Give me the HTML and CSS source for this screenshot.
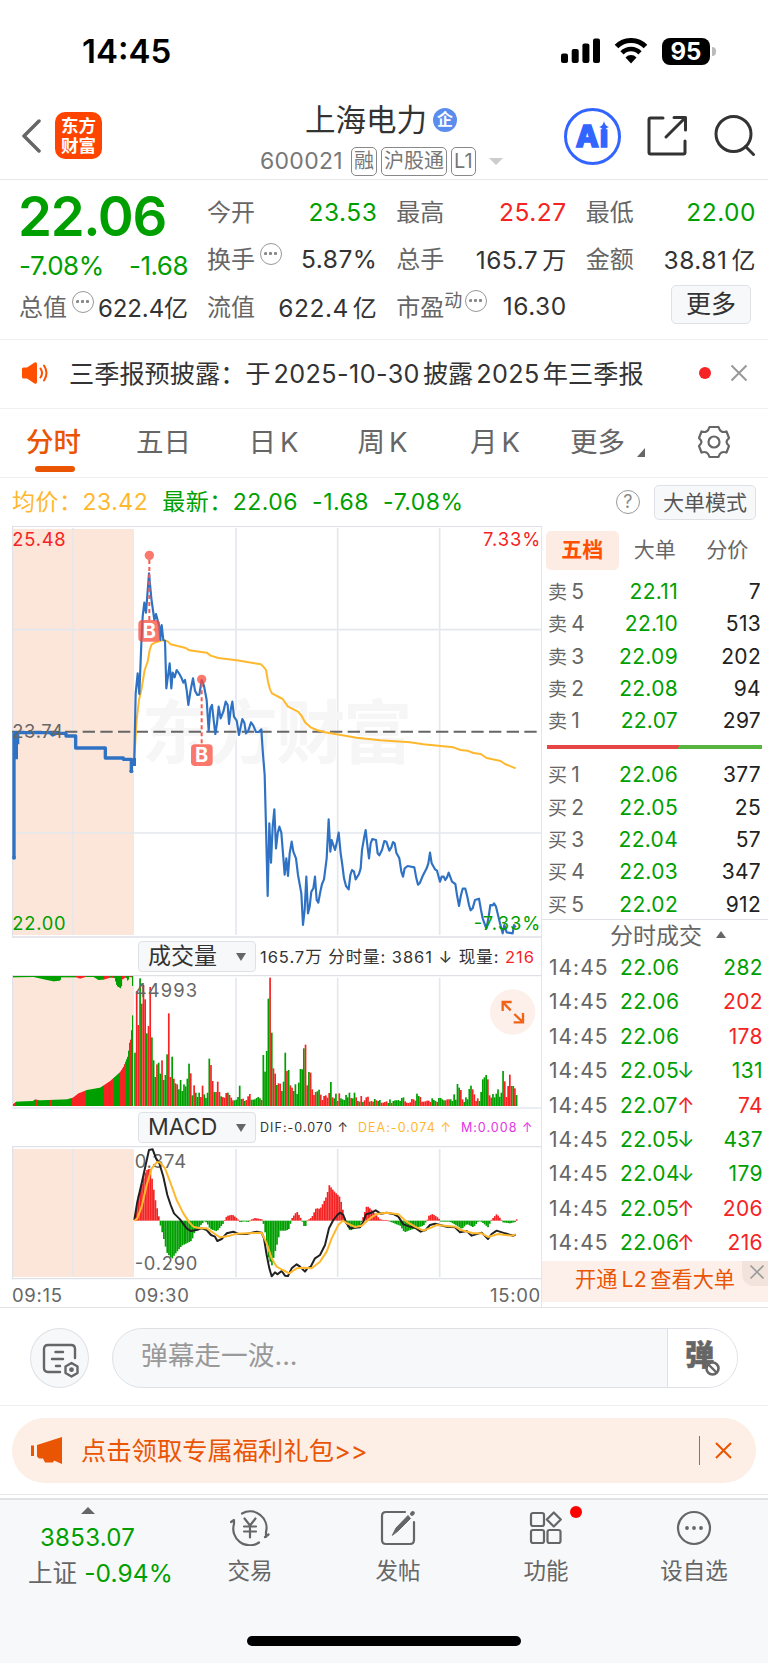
FILE: index.html
```
<!DOCTYPE html>
<html lang="zh-CN">
<head>
    <meta charset="UTF-8">
    <meta name="viewport" content="width=device-width, initial-scale=1.0">
    <title>上海电力 600021</title>
    <link rel="stylesheet" href="styles.css">
</head>
<body>
    <div class="status-bar">
        <span class="clock">14:45</span>
        <svg class="signal" width="40" height="26" viewBox="0 0 40 26">
            <rect x="0" y="15.500" width="7" height="9.500" rx="2"/>
            <rect x="10.700" y="11" width="7" height="14" rx="2"/>
            <rect x="21.400" y="5.500" width="7" height="19.500" rx="2"/>
            <rect x="32" y="0.500" width="7" height="24.500" rx="2"/>
        </svg>
        <svg class="wifi" width="34" height="26" viewBox="0 0 34 26">
            <path d="M2.500 8.500a20.500 20.500 0 0 1 29 0" fill="none" stroke="#000" stroke-width="5"/>
            <path d="M8 14.800a12.500 12.500 0 0 1 18 0" fill="none" stroke="#000" stroke-width="4.600"/>
            <path d="M11.500 19.500a7.500 7.500 0 0 1 11 0L17 25.500z"/>
        </svg>
        <span class="battery">95</span>
        <span class="battery-tip"></span>
    </div>

    <header class="header">
        <svg class="back" width="20" height="34" viewBox="0 0 20 34"><path d="M18 2 3 17l15 15" fill="none" stroke="#666" stroke-width="3.500" stroke-linecap="round" stroke-linejoin="round"/></svg>
        <div class="logo">东方<br>财富</div>
        <div class="stock">
            <div class="stock-name">上海电力<span class="badge">企</span></div>
            <div class="stock-code">
                <span class="code">600021</span>
                <span class="tag">融</span>
                <span class="tag">沪股通</span>
                <span class="tag">L1</span>
                <i class="caret"></i>
            </div>
        </div>
        <div class="tools">
            <div class="ai">
                <span>Aı</span>
                <svg width="10" height="12" viewBox="0 0 9 11"><path d="M4.500 0Q5.300 4.500 9 5.500 5.300 6.500 4.500 11 3.700 6.500 0 5.500 3.700 4.500 4.500 0z" fill="#3264ff"/></svg>
            </div>
            <svg width="42" height="42" viewBox="0 0 42 42" fill="none" stroke="#333" stroke-width="3" stroke-linecap="round" stroke-linejoin="round"><path d="M17 3H4.500Q3 3 3 4.500V37.500Q3 39 4.500 39H37.500Q39 39 39 37.500V26M28 2.500H39.500V15M39 3 20 22"/></svg>
            <svg width="42" height="42" viewBox="0 0 42 42" fill="none" stroke="#333" stroke-width="3" stroke-linecap="round"><circle cx="19.500" cy="19" r="17.500"/><path d="M31.500 31.500 39.500 39.500"/></svg>
        </div>
    </header>

    <section class="quote">
        <div class="price-col">
            <div class="price">22.06</div>
            <div class="change"><span>-7.08%</span><span>-1.68</span></div>
            <div class="cell"><label>总值</label><i class="dots"></i><b>622.4亿</b></div>
        </div>
        <div class="quote-grid">
            <div class="cell"><label>今开</label><b class="green">23.53</b></div>
            <div class="cell"><label>最高</label><b class="red">25.27</b></div>
            <div class="cell"><label>最低</label><b class="green">22.00</b></div>
            <div class="cell"><label>换手</label><i class="dots"></i><b>5.87%</b></div>
            <div class="cell"><label>总手</label><b>165.7<small>万</small></b></div>
            <div class="cell"><label>金额</label><b>38.81<small>亿</small></b></div>
            <div class="cell"><label>流值</label><b>622.4<small>亿</small></b></div>
            <div class="cell"><label>市盈<sup>动</sup></label><i class="dots near"></i><b>16.30</b></div>
            <div class="cell"><button class="more">更多</button></div>
        </div>
    </section>

    <section class="notice">
        <svg width="27" height="22" viewBox="0 0 27 22"><path d="M0 7q0-1.500 1.500-1.500H5L12.500.500q2.500-1 2.500 1.500v18q0 2.500-2.500 1.500L5 16.500H1.500Q0 16.500 0 15z" fill="#ff5000"/><path d="M18.500 6.500q3 4.500 0 9M22 3.500q5 7.500 0 15" fill="none" stroke="#ff5000" stroke-width="2" stroke-linecap="round"/></svg>
        <p>三季报预披露：于<span>2025-10-30</span>披露<span>2025</span>年三季报</p>
        <i class="red-dot"></i>
        <svg width="18" height="18" viewBox="0 0 18 18"><path d="M1.500 1.500 16.500 16.500M16.500 1.500 1.500 16.500" stroke="#999" stroke-width="2"/></svg>
    </section>

    <nav class="tabs">
        <a class="active">分时</a>
        <a>五日</a>
        <a>日<em>K</em></a>
        <a>周<em>K</em></a>
        <a>月<em>K</em></a>
        <a class="tab-more">更多</a>
        <svg width="34" height="34" viewBox="0 0 34 34" fill="none" stroke="#666" stroke-width="2.200" stroke-linejoin="round"><path d="M12.500 2H21.500Q22.500 5.500 24.500 6.500T29.500 6.500L32 13Q29.500 15.500 29.500 17T32 21L29.500 27.500Q26.500 26.500 24.500 27.500T21.500 32H12.500Q11.500 28.500 9.500 27.500T4.500 27.500L2 21Q4.500 18.500 4.500 17T2 13L4.500 6.500Q7.500 7.500 9.500 6.500T12.500 2z"/><circle cx="17" cy="17" r="5.500"/></svg>
    </nav>

    <div class="summary">
        <span class="orange">均价：<span>23.42</span></span>
        <span class="green">最新：<span>22.06</span></span>
        <span class="green">-1.68</span>
        <span class="green">-7.08%</span>
        <i class="help">?</i>
        <button class="mode">大单模式</button>
    </div>

    <main class="market">
        <div class="charts">
            <svg class="price-chart" viewBox="36 18 1590 1236">
                <rect class="auction" x="38" y="27" width="364" height="1218"/>
                <path class="grid" d="M219 24V1245M708 24V1245M1013 24V1245M1319 24V1245M38 329H1625M38 939H1625"/>
                <path class="frame" d="M36 19H1626M37.500 19V1251M36 1251H1626"/>
                <text class="watermark" x="425" y="714" textLength="812">东方财富</text>
                <path class="prev-close" d="M36 635H1620"/>
                <polyline class="avg" id="avgLine"/>
                <path class="auction-line" d="M42 1013V638M49 640V718M53 640V673M42 638H150L158 645 170 640H198V648H227V684H316V714H370V718H394V754M403 714V738"/>
                <circle cx="42" cy="1013" r="6" fill="#2f72c4"/>
                <circle cx="394" cy="754" r="6" fill="#2f72c4"/>
                <polyline class="last" id="priceLine"/>
                <g class="marker">
                    <circle cx="448" cy="106" r="14"/>
                    <path d="M448 120V300"/>
                    <rect x="415" y="300" width="65" height="65" rx="12"/>
                    <text x="448" y="354">B</text>
                    <circle cx="605" cy="478" r="14"/>
                    <path d="M605 490V672"/>
                    <rect x="573" y="673" width="65" height="65" rx="12"/>
                    <text x="605" y="727">B</text>
                </g>
                <text class="red" x="37" y="77" textLength="160">25.48</text>
                <text class="red" x="1449" y="77" textLength="172">7.33%</text>
                <text x="37" y="654" textLength="152">23.74</text>
                <text class="green" x="37" y="1229" textLength="160">22.00</text>
                <text class="green" x="1421" y="1229" textLength="200">-7.33%</text>
            </svg>

            <div class="indicator">
                <span class="select">成交量</span>
                <p class="vol-info">165.7万 分时量: 3861 ↓ 现量: <span class="red">216</span></p>
            </div>
            <svg class="volume-chart" viewBox="36 120 1590 402">
                <rect class="auction" x="38" y="121" width="364" height="392"/>
                <path class="grid" d="M219 128V513M708 128V513M1013 128V513M1319 128V513M36 519H1626"/>
                <path class="frame" d="M36 121.500H1626M37.500 121V513"/>
                <g id="volumeBars"></g>
                <text x="404" y="185" textLength="187">44993</text>
                <circle cx="1538" cy="231" r="68" fill="#fdf0ea"/>
                <path class="expand" d="M1535 201H1508V228M1509 202 1532 226M1569 234V262H1541M1568 261 1543 237"/>
            </svg>

            <div class="indicator">
                <span class="select">MACD</span>
                <p class="macd-info"><span>DIF:-0.070 ↑</span><span class="orange">DEA:-0.074 ↑</span><span class="purple">M:0.008 ↑</span></p>
            </div>
            <svg class="macd-chart" viewBox="36 633 1590 402">
                <rect class="auction" x="38" y="642" width="364" height="384"/>
                <path class="grid" d="M219 642V1026M708 642V1026M1013 642V1026M1319 642V1026"/>
                <path class="frame" d="M36 634.500H1626M37.500 634V1030M36 1031H1626"/>
                <g id="macdBars"></g>
                <text x="404" y="699" textLength="154">0.374</text>
                <text x="404" y="1006" textLength="188">-0.290</text>
                <polyline class="dif" id="difLine"/>
                <polyline class="avg" id="deaLine"/>
            </svg>
            <div class="times"><span>09:15</span><span>09:30</span><span>15:00</span></div>
        </div>

        <aside class="depth">
            <div class="depth-tabs"><a class="active">五档</a><a>大单</a><a>分价</a></div>
            <ul class="orders">
                <li><span>卖<em>5</em></span><b>22.11</b><i>7</i></li>
                <li><span>卖<em>4</em></span><b>22.10</b><i>513</i></li>
                <li><span>卖<em>3</em></span><b>22.09</b><i>202</i></li>
                <li><span>卖<em>2</em></span><b>22.08</b><i>94</i></li>
                <li><span>卖<em>1</em></span><b>22.07</b><i>297</i></li>
            </ul>
            <div class="ratio"></div>
            <ul class="orders">
                <li><span>买<em>1</em></span><b>22.06</b><i>377</i></li>
                <li><span>买<em>2</em></span><b>22.05</b><i>25</i></li>
                <li><span>买<em>3</em></span><b>22.04</b><i>57</i></li>
                <li><span>买<em>4</em></span><b>22.03</b><i>347</i></li>
                <li><span>买<em>5</em></span><b>22.02</b><i>912</i></li>
            </ul>
            <div class="deals-title">分时成交<i></i></div>
            <ul class="deals">
                <li><span>14:45</span><b>22.06</b><i class="green">282</i></li>
                <li><span>14:45</span><b>22.06</b><i class="red">202</i></li>
                <li><span>14:45</span><b>22.06</b><i class="red">178</i></li>
                <li class="down"><span>14:45</span><b>22.05</b><i class="green">131</i></li>
                <li class="up"><span>14:45</span><b>22.07</b><i class="red">74</i></li>
                <li class="down"><span>14:45</span><b>22.05</b><i class="green">437</i></li>
                <li class="down"><span>14:45</span><b>22.04</b><i class="green">179</i></li>
                <li class="up"><span>14:45</span><b>22.05</b><i class="red">206</i></li>
                <li class="up"><span>14:45</span><b>22.06</b><i class="red">216</i></li>
            </ul>
            <div class="l2">
                开通<span>L2</span>查看大单
                <div class="l2-close"><svg width="16" height="16" viewBox="0 0 16 16"><path d="M1.500 1.500 14.500 14.500M14.500 1.500 1.500 14.500" stroke="#999" stroke-width="1.600"/></svg></div>
            </div>
        </aside>
    </main>

    <section class="comment">
        <div class="round">
            <svg width="38" height="36" viewBox="0 0 38 36" fill="none" stroke="#666" stroke-width="2.400" stroke-linecap="round" stroke-linejoin="round"><path d="M18 29H6Q2 29 2 25V6Q2 2 6 2H29Q33 2 33 6V15M13.500 9H21M10 16H21M14 23H18M29.500 20 35.500 23.500V30L29.500 33.500 23.500 30V23.500z"/><circle cx="29.500" cy="26.700" r="1.200"/></svg>
        </div>
        <div class="input">
            <span class="placeholder">弹幕走一波...</span>
            <div class="danmu">
                <span>弹</span>
                <svg width="17" height="17" viewBox="0 0 17 17"><circle cx="8.500" cy="8.500" r="6" fill="#fff" stroke="#666" stroke-width="2.600"/><path d="M4.500 4.500 12.500 12.500" stroke="#666" stroke-width="2.400"/></svg>
            </div>
        </div>
    </section>

    <section class="gift-wrap">
        <div class="gift">
            <svg width="31" height="27" viewBox="0 0 31 27" fill="#ea5504"><path d="M0 8.500H3V19H0zM6 8 31 0V27L23 23.500 22 25.500H14L12 21.500H8L6 19.500z"/></svg>
            <p>点击领取专属福利礼包&gt;&gt;</p>
            <i class="divider"></i>
            <svg width="17" height="17" viewBox="0 0 17 17"><path d="M1 1 16 16M16 1 1 16" stroke="#ea5504" stroke-width="2"/></svg>
        </div>
    </section>

    <footer class="bottom">
        <div class="index">
            <i></i>
            <strong>3853.07</strong>
            <p>上证 <span>-0.94%</span></p>
        </div>
        <div class="item">
            <svg width="40" height="36" viewBox="0 0 40 36" fill="none" stroke="#666" stroke-width="2.200" stroke-linecap="round" stroke-linejoin="round"><path d="M12 3.500A16.500 16.500 0 0 1 36 22V27M38.500 24.500 35 27M29 32.500A16.500 16.500 0 0 1 4 14V10L1 12M14.500 8.500 20 15.500 25.500 8.500M20 15.500V27.500M14 16.500H26M14 21.500H26"/></svg>
            <span>交易</span>
        </div>
        <div class="item">
            <svg width="36" height="36" viewBox="0 0 36 36" fill="none" stroke="#666" stroke-width="2.200" stroke-linecap="round"><path d="M25 2H6Q2 2 2 6V30Q2 34 6 34H30Q34 34 34 30V12"/><path d="M12.500 25 16 18 28 5.500 30.500 8.500 18 21z" fill="#666" stroke-width="1"/><path d="M32 3.800 32.800 3" stroke-width="4"/></svg>
            <span>发帖</span>
        </div>
        <div class="item">
            <svg width="34" height="34" viewBox="0 0 34 34" fill="none" stroke="#666" stroke-width="2.200"><rect x="2" y="2" width="13" height="13" rx="2"/><path d="M24.800 1.500 31.800 8.500 24.800 15.500 17.800 8.500z" stroke-linejoin="round"/><rect x="2" y="19" width="13" height="13" rx="2"/><rect x="18.500" y="19" width="13" height="13" rx="2"/></svg>
            <i class="red-dot"></i>
            <span>功能</span>
        </div>
        <div class="item">
            <svg width="36" height="36" viewBox="0 0 36 36" fill="#666"><circle cx="18" cy="18" r="16" fill="none" stroke="#666" stroke-width="2.200"/><circle cx="11" cy="18" r="1.900"/><circle cx="18" cy="18" r="1.900"/><circle cx="25" cy="18" r="1.900"/></svg>
            <span>设自选</span>
        </div>
        <div class="home-bar"></div>
    </footer>

    <script>
        const RED = "#f52323";
        const GREEN = "#009f00";

        const price = "403,714 407,520 413,460 418,522 424,370 428,290 433,248 438,278 447,160 454,235 463,300 468,282 478,320 481,360 485,315 490,360 495,362 499,505 509,430 514,505 518,458 524,472 530,450 537,460 545,475 550,488 555,480 560,510 565,555 572,510 579,475 585,512 592,525 598,524 605,480 612,498 620,540 626,632 631,565 636,555 641,600 646,642 651,610 656,560 662,595 670,575 677,545 683,555 687,612 692,570 697,545 702,590 710,602 717,645 727,597 733,608 738,640 745,632 753,607 760,617 768,636 776,636 784,628 788,690 794,765 798,920 803,1128 808,910 813,1028 818,920 823,868 828,985 833,940 838,920 844,938 849,1000 854,1064 859,1015 864,1068 869,1000 875,965 880,995 888,1015 894,1065 904,1120 909,1215 914,1170 919,1070 924,1180 929,1160 934,1115 940,1105 945,1070 950,1140 955,1148 960,1120 966,1092 972,1078 980,1015 986,898 991,995 995,960 1005,990 1011,965 1016,938 1022,1000 1027,1035 1032,1075 1038,1098 1046,1108 1051,1065 1056,1050 1062,1055 1067,1078 1077,1062 1082,1045 1086,990 1092,955 1097,930 1102,975 1107,1015 1112,970 1117,957 1128,960 1133,1000 1138,1006 1146,990 1153,963 1159,965 1168,992 1174,982 1179,966 1184,970 1189,998 1198,1015 1204,1055 1209,1070 1214,1045 1223,1038 1243,1042 1249,1075 1254,1094 1260,1088 1268,1068 1280,1045 1285,1030 1290,998 1295,1030 1305,1048 1311,1052 1320,1085 1325,1070 1331,1070 1336,1080 1341,1072 1346,1058 1356,1085 1366,1092 1371,1125 1377,1158 1383,1125 1388,1106 1396,1106 1402,1130 1407,1155 1412,1171 1418,1165 1425,1140 1437,1136 1443,1170 1448,1195 1459,1226 1466,1190 1471,1155 1478,1156 1482,1150 1488,1160 1494,1185 1500,1210 1508,1240 1513,1215 1520,1237 1538,1240 1542,1215 1547,1222";
        const avg = "403,714 410,600 417,540 424,510 434,450 443,425 449,390 455,373 465,368 490,360 503,364 512,373 557,384 568,391 620,398 632,407 655,414 710,421 783,433 790,440 798,450 804,485 810,508 816,520 848,537 864,560 894,575 905,588 915,607 932,622 950,630 975,637 1070,653 1140,661 1230,667 1270,673 1360,682 1382,690 1402,692 1420,699 1442,702 1460,714 1502,723 1515,732 1547,745";
        const dif = "403,855 412,800 425,745 437,690 447,645 458,643 468,670 478,685 490,725 502,780 512,810 522,835 540,853 560,880 572,888 590,885 605,880 620,885 633,900 645,905 652,918 665,912 680,895 700,890 715,897 740,897 770,890 785,893 792,910 800,960 808,1000 815,1024 825,1012 832,1018 845,1008 855,1022 864,1023 875,1000 890,988 900,995 915,1010 922,1000 932,995 945,970 960,960 975,930 987,880 1000,855 1012,840 1020,833 1030,840 1038,862 1050,880 1080,877 1090,860 1098,838 1115,833 1127,826 1142,836 1160,833 1182,838 1195,845 1210,868 1230,875 1245,878 1262,890 1277,885 1290,870 1305,866 1340,875 1365,877 1380,892 1400,888 1415,902 1445,893 1464,912 1475,897 1490,887 1515,895 1540,902 1547,899";
        const dea = "403,857 412,850 425,815 440,750 455,700 470,682 480,682 495,700 512,745 530,795 550,835 568,862 580,875 600,880 620,880 645,897 660,907 690,902 710,896 740,895 785,893 800,925 815,970 830,995 848,1005 868,1015 890,1000 910,998 935,1000 960,980 980,950 995,910 1015,870 1028,857 1042,865 1065,876 1085,872 1110,850 1130,837 1160,833 1195,838 1220,860 1245,875 1270,887 1295,877 1310,870 1365,875 1385,886 1420,895 1445,895 1464,906 1495,897 1515,900 1535,902 1547,898";

        // one entry per minute: direction + height
        const volume = "g160 r345 r243 g383 r307 r363 r320 g218 r240 r357 g206 g137 g87 r125 g130 g97 r137 g78 g93 g155 r278 r87 g148 r82 g68 r65 g50 g78 g45 g65 g59 g82 g127 r98 g32 r62 g40 g27 g40 r27 r61 g35 g24 g40 g142 r123 r75 g42 r42 r73 r42 g29 r27 r25 r39 g40 r33 r25 r17 g17 g19 g27 g61 g21 r22 g15 r18 r29 r36 g19 g19 g20 g24 g27 g23 r18 g153 g103 g165 g322 r385 g220 r113 r97 g63 r68 r67 g45 g73 g160 r105 g108 r62 r55 g45 g65 g36 g70 g111 g110 g173 r184 r62 g102 r100 r50 r33 r42 g44 g49 r34 r18 r30 r32 r25 r39 g72 r26 g23 g37 r15 r38 g23 g20 g18 g33 g26 g40 r24 g23 g40 r26 g15 r13 r30 g12 r17 r26 r28 g13 r15 r13 g21 r17 g15 g18 r10 r10 r12 r14 g9 g20 r9 g15 g17 g17 g18 g15 g24 g26 r14 r10 r9 r11 r21 r20 r16 g37 g30 r27 r13 r13 r14 r16 r16 r12 g23 g18 g15 r12 g24 g24 g20 g17 r17 r20 r20 g20 g15 g35 g19 g66 g55 r48 r20 g12 g26 g20 g51 g61 r50 r35 r15 r23 g15 g42 g80 g86 g93 r80 r32 r25 g36 g26 g37 g50 g28 g40 g105 r74 r27 r60 r94 r60 g60 r53 g33";
        const auctionVolume = [[38,5],[48,13],[98,15],[105,20],[118,17],[200,20],[218,25],[235,38],[260,48],[300,55],[330,75],[360,102],[370,118],[383,150],[388,190],[393,205],[396,272],[400,272]];
        const auctionRest = [[38,4],[100,3],[140,12],[160,16],[180,14],[184,4],[228,4],[240,8],[256,3],[280,3],[295,12],[310,11],[330,5],[343,6],[350,30],[363,38],[367,10],[378,4],[383,16],[388,3],[394,4],[396,30],[400,30]];
        const auctionRed = [[38,44],[98,102],[106,109],[134,137],[148,152],[216,257],[310,326],[330,340],[360,376],[386,392]];
        const restRed = [[226,258],[312,328],[333,338],[365,378],[387,392]];
        const macd = [[403,5],[415,75],[437,150],[450,158],[455,130],[465,65],[478,3],[481,-15],[490,-50],[500,-95],[515,-115],[525,-100],[545,-75],[575,-60],[583,-35],[605,-10],[614,0],[622,-10],[630,-25],[650,-32],[670,-8],[675,5],[680,14],[697,18],[712,6],[720,-5],[732,-2],[745,-4],[752,3],[765,8],[785,4],[789,-5],[795,-35],[800,-70],[805,-110],[815,-135],[823,-100],[831,-70],[840,-30],[858,-30],[866,-25],[873,-3],[876,8],[890,28],[904,4],[911,-16],[917,-16],[921,0],[935,10],[948,38],[960,35],[980,75],[987,107],[1000,90],[1020,70],[1034,5],[1040,-15],[1050,-30],[1080,-15],[1087,5],[1100,45],[1115,32],[1140,4],[1150,2],[1162,2],[1170,-3],[1200,-15],[1213,-35],[1230,-28],[1270,-15],[1281,2],[1285,14],[1297,20],[1315,8],[1322,-3],[1350,-3],[1370,-15],[1385,-25],[1400,-10],[1420,-20],[1436,0],[1445,-4],[1464,-20],[1474,3],[1490,20],[1503,4],[1508,-5],[1530,-8],[1545,-4],[1549,4],[1554,4]];

        document.getElementById("priceLine").setAttribute("points", price);
        document.getElementById("avgLine").setAttribute("points", avg);
        document.getElementById("difLine").setAttribute("points", dif);
        document.getElementById("deaLine").setAttribute("points", dea);

        function valueAt(points, x) {
            for (let i = 1; i < points.length; i++) {
                let [x0, y0] = points[i - 1];
                let [x1, y1] = points[i];
                if (x <= x1) return y0 + (y1 - y0) * (x - x0) / (x1 - x0);
            }
            return points[points.length - 1][1];
        }

        function inRanges(ranges, x) {
            return ranges.some(r => x >= r[0] && x < r[1]);
        }

        function addBar(group, x, y, width, height, color) {
            let bar = document.createElementNS("http://www.w3.org/2000/svg", "rect");
            bar.setAttribute("x", x);
            bar.setAttribute("y", y);
            bar.setAttribute("width", width);
            bar.setAttribute("height", height);
            bar.setAttribute("fill", color);
            group.appendChild(bar);
        }

        let volumeBars = document.getElementById("volumeBars");
        for (let x = 39; x < 399; x += 3) {
            let h = valueAt(auctionVolume, x + 1);
            addBar(volumeBars, x, 513 - h, 3.3, h, inRanges(auctionRed, x) ? RED : GREEN);
            addBar(volumeBars, x, 123, 3.3, valueAt(auctionRest, x + 1), inRanges(restRed, x) ? RED : GREEN);
        }
        volume.split(" ").forEach((item, i) => {
            let h = Number(item.slice(1));
            addBar(volumeBars, 402.5 + i * 5.065, 513 - h, 5.1, h, item[0] === "r" ? RED : GREEN);
        });

        let macdBars = document.getElementById("macdBars");
        for (let i = 0; i < 227; i++) {
            let x = 403 + i * 5.065;
            let v = valueAt(macd, x + 2);
            addBar(macdBars, x, v > 0 ? 857 - v : 857, 5.1, Math.max(Math.abs(v), 2), v > 0 ? RED : GREEN);
        }
    </script>
</body>
</html>
```
FILE: styles.css
```
* {
    box-sizing: border-box;
}
body {
    margin: 0;
    width: 768px;
    background: #fff;
    color: #333;
    font-family: Inter, "Noto Sans CJK SC", sans-serif;
}
p, ul {
    margin: 0;
    padding: 0;
    list-style: none;
}
i, em {
    font-style: normal;
}
b {
    font-weight: 400;
}
svg {
    display: block;
    flex: none;
}
.red {
    color: #f52323;
    fill: #f52323;
}
.green {
    color: #009f00;
    fill: #009f00;
}
.orange {
    color: #ffb82e;
}
.purple {
    color: #e335e3;
}
.red-dot {
    width: 12px;
    height: 12px;
    border-radius: 50%;
    background: #f52323;
}

/* status bar */
.status-bar {
    display: flex;
    align-items: center;
    height: 95px;
    padding: 7px 0 0 82px;
}
.clock {
    width: 479px;
    font-size: 33px;
    font-weight: 600;
    color: #000;
}
.wifi {
    margin-left: 13px;
}
.battery {
    width: 48px;
    height: 27px;
    margin-left: 14px;
    border-radius: 8px;
    background: #000;
    color: #fff;
    font-size: 24px;
    font-weight: 700;
    line-height: 27px;
    text-align: center;
}
.battery-tip {
    width: 4px;
    height: 9px;
    margin-left: 2px;
    border-radius: 0 4px 4px 0;
    background: #bbb;
}

/* header */
.header {
    display: flex;
    height: 85px;
    border-bottom: 1px solid #e8e8e8;
    padding-left: 21px;
}
.back {
    margin-top: 24px;
}
.logo {
    width: 47px;
    height: 47px;
    margin: 17px 0 0 14px;
    padding-top: 4px;
    border-radius: 10px;
    background: #ff4400;
    color: #fff;
    font-size: 17.500px;
    font-weight: 700;
    line-height: 19.500px;
    text-align: center;
}
.stock {
    width: 303px;
    margin-left: 158px;
}
.stock-name {
    display: flex;
    align-items: center;
    height: 49px;
    padding: 0 0 3px 45px;
    font-size: 30.500px;
}
.badge {
    width: 24px;
    height: 24px;
    margin: 3px 0 0 6px;
    border-radius: 50%;
    background: #5b8dee;
    color: #fff;
    font-size: 16px;
    font-weight: 700;
    line-height: 22px;
    text-align: center;
}
.stock-code {
    display: flex;
    align-items: center;
    gap: 4px;
    height: 34px;
    color: #777;
    font-size: 23px;
}
.code {
    width: 87px;
    letter-spacing: 0.3px;
}
.tag {
    height: 29px;
    padding: 0 2px;
    border: 1.500px solid #888;
    border-radius: 5px;
    font-size: 20px;
    line-height: 26px;
}
.caret {
    margin-left: 9px;
    border: 7px solid transparent;
    border-top-color: #ccc;
    border-bottom: 0;
}
.tools {
    display: flex;
    align-items: center;
    gap: 25px;
    margin-left: 1px;
    height: 82px;
}
.ai {
    position: relative;
    width: 57px;
    height: 57px;
    border: 3px solid #3264ff;
    border-radius: 50%;
    color: #3264ff;
    font-size: 30px;
    font-weight: 800;
    line-height: 51px;
    letter-spacing: 1px;
    text-align: center;
    -webkit-text-stroke: 1.500px #3264ff;
}
.ai svg {
    position: absolute;
    right: 9px;
    top: 10px;
}
.tools > svg + svg {
    margin-left: 1px;
}

/* quote */
.quote {
    display: flex;
    height: 160px;
    padding: 8px 13px 9px 19px;
    border-bottom: 1px solid #f0f0f0;
}
.price-col {
    width: 169px;
    margin-right: 19px;
}
.price {
    height: 54px;
    margin-left: -1px;
    color: #009f00;
    font-size: 54.500px;
    font-weight: 600;
    line-height: 56px;
    letter-spacing: -1.300px;
}
.change {
    display: flex;
    justify-content: space-between;
    height: 41px;
    color: #009f00;
    font-size: 26px;
    line-height: 48px;
    letter-spacing: -0.500px;
}
.quote-grid {
    flex: 1;
    display: grid;
    grid-template-columns: repeat(3, 1fr);
    grid-template-rows: repeat(3, 47.300px);
    column-gap: 20px;
}
.cell {
    display: flex;
    align-items: center;
    height: 47px;
    font-size: 24px;
}
.cell label {
    margin-top: -2px;
    color: #666;
}
.cell sup {
    position: relative;
    top: -9px;
    font-size: 18px;
    line-height: 1;
    vertical-align: baseline;
}
.cell b {
    margin-left: auto;
    letter-spacing: -0.300px;
}
.price-col .cell b {
    letter-spacing: -0.100px;
}
.quote-grid b {
    margin-right: -1px;
    font-size: 24.500px;
    letter-spacing: 0.500px;
}
.cell small {
    margin-left: 4px;
    font-size: 24px;
}
.dots {
    width: 22px;
    height: 22px;
    margin: -10px 0 0 5px;
    padding: 7px 2px;
    border: 1.500px solid #999;
    border-radius: 50%;
    background: radial-gradient(circle, #888 1.300px, transparent 1.900px) 0 0 / 5px 5px;
    background-origin: content-box;
    background-clip: content-box;
}
.dots.near {
    margin-left: 3px;
}
.more {
    width: 80px;
    height: 39px;
    margin: -4px 4px 0 auto;
    padding: 0;
    border: 1.500px solid #dfe1e6;
    border-radius: 5px;
    background: #f7f8fa;
    color: #333;
    font: 25px/36px Inter, "Noto Sans CJK SC", sans-serif;
}

/* notice */
.notice {
    display: flex;
    align-items: center;
    height: 69px;
    padding: 0 20px 3px 22px;
    border-bottom: 1px solid #f0f0f0;
}
.notice p {
    width: 630px;
    margin: -2px 0 0 20px;
    font-size: 25.200px;
    white-space: nowrap;
}
.notice p span {
    margin: 0 3px;
    letter-spacing: 0.400px;
}
.notice .red-dot {
    margin-right: 19px;
}
.notice svg:last-child {
    margin-left: auto;
}

/* period tabs */
.tabs {
    display: flex;
    height: 69px;
    padding-left: 26px;
    border-bottom: 1px solid #f0f0f0;
    color: #666;
    font-size: 27.500px;
    line-height: 67px;
}
.tabs a {
    position: relative;
    width: 112.500px;
}
.tabs a em {
    margin-left: 4px;
}
.tabs .active {
    width: 110px;
    color: #ea5504;
    font-weight: 500;
}
.tabs .active::after {
    content: "";
    position: absolute;
    left: 9px;
    bottom: 5px;
    width: 40px;
    height: 6px;
    border-radius: 3px;
    background: #ea5504;
}
.tabs a:nth-child(3) {
    width: 109px;
}
.tabs a:nth-child(5) {
    width: 100px;
}
.tabs .tab-more {
    width: 127px;
}
.tab-more::after {
    content: "";
    position: absolute;
    left: 67px;
    top: 39px;
    border-left: 8px solid transparent;
    border-bottom: 9px solid #666;
}
.tabs svg {
    margin-top: 16px;
}

/* summary line */
.summary {
    display: flex;
    align-items: center;
    gap: 14px;
    height: 48px;
    padding: 0 12px;
    font-size: 23px;
    line-height: 30px;
    letter-spacing: 0.500px;
    white-space: nowrap;
}
.help {
    width: 24px;
    height: 24px;
    margin-left: auto;
    border: 1.500px solid #999;
    border-radius: 50%;
    color: #888;
    font-size: 18px;
    line-height: 21px;
    text-align: center;
}
.mode {
    width: 102px;
    height: 35px;
    padding: 0;
    border: 1.500px solid #dfe1e6;
    border-radius: 5px;
    background: #f7f8fa;
    color: #555;
    font: 21px/31px Inter, "Noto Sans CJK SC", sans-serif;
}

/* charts */
.market {
    display: flex;
    height: 782px;
    border-bottom: 1px solid #e3e3e8;
}
.charts {
    width: 542px;
    padding-left: 12px;
    border-right: 1px solid #e3e5ec;
}
.charts svg {
    width: 530px;
}
.charts text {
    font-size: 55px;
    fill: #666;
}
.charts text.red {
    fill: #f52323;
}
.charts text.green {
    fill: #009f00;
}
.price-chart {
    height: 412px;
}
.volume-chart, .macd-chart {
    height: 134px;
}
.auction {
    fill: #fce6da;
}
.grid {
    fill: none;
    stroke: #e4e7ee;
    stroke-width: 5;
}
.frame {
    fill: none;
    stroke: #dfe1e7;
    stroke-width: 4;
}
.charts .watermark {
    font-size: 208px;
    font-weight: 700;
    fill: #f6f6f6;
}
.prev-close {
    stroke: #666;
    stroke-width: 6;
    stroke-dasharray: 37 16;
}
.avg, .last, .dif, .auction-line {
    fill: none;
    stroke-linejoin: round;
}
.avg {
    stroke: #ffb82e;
    stroke-width: 6;
}
.dif {
    stroke: #222;
    stroke-width: 6;
}
.last {
    stroke: #2f72c4;
    stroke-width: 6.500;
}
.auction-line {
    stroke: #2f72c4;
    stroke-width: 10;
}
.marker {
    fill: #fa4b3c;
    fill-opacity: 0.75;
}
.marker path {
    stroke: #fa5a4b;
    stroke-width: 6;
    stroke-dasharray: 12 9;
}
.charts .marker text {
    fill: #fff;
    fill-opacity: 1;
    font-size: 60px;
    font-weight: 700;
    text-anchor: middle;
}
.expand {
    fill: none;
    stroke: #f06418;
    stroke-width: 7;
}
.indicator {
    display: flex;
    align-items: center;
    height: 37px;
    padding-left: 126px;
}
.select {
    display: flex;
    align-items: center;
    width: 118px;
    height: 31px;
    padding: 0 9px 0 9px;
    border: 1px solid #dfe1e6;
    border-radius: 4px;
    background: #f7f8fa;
    font-size: 23px;
    line-height: 29px;
}
.select::after {
    content: "";
    margin-left: auto;
    border: 5px solid transparent;
    border-top: 8px solid #666;
    border-bottom: 0;
}
.vol-info {
    margin: -2px 0 0 4px;
    font-size: 16.500px;
    letter-spacing: 0.950px;
    white-space: nowrap;
}
.macd-info {
    display: flex;
    gap: 9px;
    margin-left: 4px;
    font-size: 12.500px;
    letter-spacing: 1.050px;
    white-space: nowrap;
}
.times {
    display: flex;
    height: 28px;
    color: #666;
    font-size: 18.500px;
    line-height: 30px;
    letter-spacing: 0.700px;
}
.times span {
    width: 122.500px;
}
.times span:last-child {
    margin-left: auto;
    width: auto;
}

/* order book */
.depth {
    flex: 1;
    color: #666;
}
.depth-tabs {
    display: flex;
    height: 48px;
    padding: 5px 4px;
}
.depth-tabs a {
    width: 72.500px;
    height: 39px;
    border-radius: 5px;
    font-size: 21px;
    line-height: 37px;
    text-align: center;
}
.depth-tabs .active {
    background: #fdece3;
    color: #ff5000;
    font-weight: 700;
}
.orders li {
    display: grid;
    grid-template-columns: 50px 80px 1fr;
    height: 32.300px;
    padding: 0 7px 0 6px;
    font-size: 21px;
    line-height: 35px;
    letter-spacing: 0.300px;
}
.orders span {
    font-size: 19px;
}
.orders em {
    margin-left: 4px;
    font-size: 21px;
}
.orders b {
    color: #009f00;
    text-align: right;
}
.orders i {
    color: #222;
    text-align: right;
}
.ratio {
    height: 4px;
    margin: 10px 6px 8px 5px;
    background: linear-gradient(120deg, #e64545 61%, #55b53e 61%);
}
.deals-title {
    display: flex;
    align-items: center;
    gap: 14px;
    height: 32px;
    padding: 0 0 2px 68px;
    border-top: 1.500px solid #dfe1e7;
    font-size: 23px;
}
.deals-title i {
    border: 5px solid transparent;
    border-bottom: 7px solid #666;
    border-top: 0;
}
.deals li {
    display: grid;
    grid-template-columns: 71px 76px 1fr;
    height: 34.400px;
    padding: 0 5px 0 7px;
    font-size: 21px;
    line-height: 34.400px;
    letter-spacing: 0.400px;
}
.deals span {
    letter-spacing: 1px;
}
.deals b {
    position: relative;
    color: #009f00;
}
.deals i {
    text-align: right;
}
.down b::after, .up b::after {
    content: "↓";
    position: absolute;
    left: 57px;
}
.up b::after {
    content: "↑";
    color: #f52323;
}
.l2 {
    position: relative;
    height: 41px;
    margin-top: 1px;
    padding-left: 33px;
    background: #fdf0ea;
    color: #ea5504;
    font-size: 21.200px;
    line-height: 37px;
}
.l2 span {
    margin: 0 3px 0 4px;
    letter-spacing: 0.500px;
}
.l2-close {
    position: absolute;
    right: 0;
    top: 0;
    width: 26px;
    height: 25px;
    padding: 3px 0 0 7px;
    border-radius: 0 0 0 12px;
    background: #f2e4dd;
}

/* comment */
.comment {
    display: flex;
    height: 98px;
    padding: 20px 30px 0;
    border-bottom: 1.500px solid #f0f0f0;
}
.round {
    width: 59px;
    height: 60px;
    padding: 14px 0 0 11px;
    border: 1.500px solid #dfe1e6;
    border-radius: 50%;
    background: #f7f8fa;
}
.input {
    display: flex;
    width: 626px;
    height: 60px;
    margin-left: 23px;
    border: 1.500px solid #dfe1e6;
    border-radius: 30px;
    background: #f7f8fa;
    overflow: hidden;
}
.placeholder {
    flex: 1;
    padding-left: 28px;
    color: #999;
    font-size: 26.700px;
    line-height: 52px;
}
.danmu {
    position: relative;
    width: 70px;
    border-left: 1.500px solid #dfe1e6;
    background: #fff;
    padding-left: 17px;
    color: #666;
    font-size: 29px;
    font-weight: 900;
    line-height: 54px;
    -webkit-text-stroke: 0.500px #666;
}
.danmu svg {
    position: absolute;
    left: 36px;
    top: 31px;
}

/* gift banner */
.gift-wrap {
    height: 89px;
    padding: 12px 12px 0;
    border-bottom: 1.500px solid #e4e6ea;
}
.gift {
    display: flex;
    align-items: center;
    height: 65px;
    padding: 0 24px 0 19px;
    border-radius: 33px;
    background: #fdeee6;
    color: #ea5504;
}
.gift p {
    margin: -3px 0 0 19px;
    font-size: 25.300px;
}
.divider {
    width: 1.500px;
    height: 29px;
    margin: 0 15px 0 auto;
    background: #ea5504;
}

/* bottom bar */
.bottom {
    position: relative;
    display: flex;
    height: 166px;
    margin-top: 3px;
    border-top: 2px solid #e1e2e6;
    background: #f7f8fa;
    color: #666;
}
.index {
    width: 176px;
    padding: 7px 0 0 28px;
    color: #009f00;
    font-size: 24.500px;
    white-space: nowrap;
}
.index i {
    display: block;
    width: 0;
    margin-left: 53px;
    border: 7px solid transparent;
    border-bottom: 7px solid #666;
    border-top: 0;
}
.index strong {
    display: block;
    padding-left: 12px;
    font-size: 24px;
    font-weight: 400;
    line-height: 47px;
    letter-spacing: 0.300px;
}
.index p {
    color: #666;
    line-height: 24px;
    letter-spacing: 0.100px;
}
.index p span {
    color: #009f00;
}
.item {
    position: relative;
    display: flex;
    flex-direction: column;
    align-items: center;
    width: 148px;
    height: 90px;
    padding-top: 10px;
    font-size: 22.500px;
}
.item svg {
    height: 36px;
}
.item span {
    margin-top: 12px;
    line-height: 26px;
}
.item .red-dot {
    position: absolute;
    left: 98px;
    top: 6px;
    background: #f00;
}
.home-bar {
    position: absolute;
    left: 247px;
    top: 136px;
    width: 274px;
    height: 10px;
    border-radius: 5px;
    background: #000;
}
```
